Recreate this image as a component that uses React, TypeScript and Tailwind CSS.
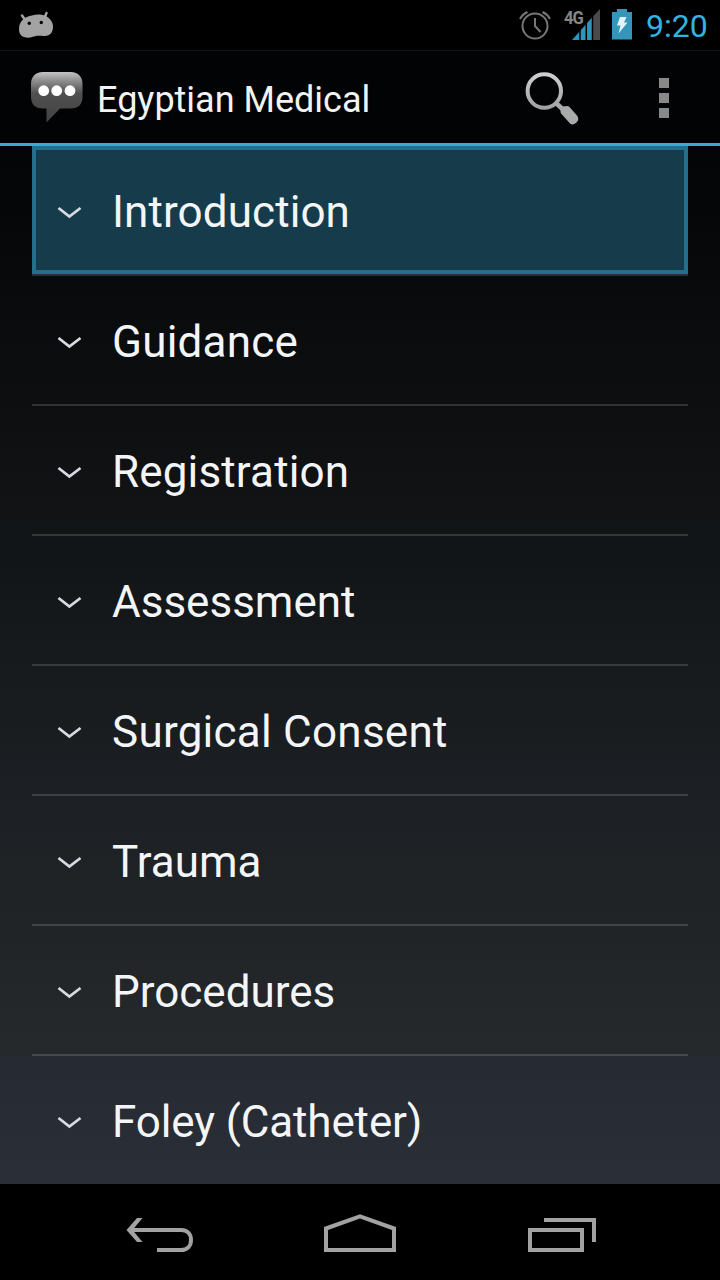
type Section = {
  title: string;
  tracking: string;
};

type SectionRowProps = Section & {
  selected?: boolean;
};

const sections: Section[] = [
  { title: "Introduction", tracking: "tracking-[0.1px]" },
  { title: "Guidance", tracking: "tracking-[0.2px]" },
  { title: "Registration", tracking: "tracking-[0.15px]" },
  { title: "Assessment", tracking: "tracking-normal" },
  { title: "Surgical Consent", tracking: "tracking-[0.25px]" },
  { title: "Trauma", tracking: "tracking-normal" },
  { title: "Procedures", tracking: "tracking-normal" },
  { title: "Foley (Catheter)", tracking: "tracking-[-0.12px]" },
];

function StatusBar() {
  return (
    <div className="flex h-[50px] shrink-0 items-center bg-black pl-[18px] pr-[13px]">
      <svg width="36" height="28" viewBox="0 0 36 28" className="shrink-0">
        <path d="M4 4.500l3.500 5M28.500 2l-2 5" stroke="#a3a3a3" strokeWidth="2.500" strokeLinecap="round" />
        <path
          d="M14 4.500C18 3 24 3 28 5c4 2.500 7 6 7 10.500 0 6-3 9.500-8 9.500-4 0-6-.5-9 0-3 .6-4.500 1.700-8 1.700-6 0-9-3.200-9-8.700C1 10 7 5.500 14 4.500Z"
          fill="#a3a3a3"
        />
        <circle cx="11.300" cy="12.300" r="1.700" fill="#000" />
        <circle cx="23.300" cy="11.500" r="1.700" fill="#000" />
      </svg>
      <div className="ml-auto flex items-center">
        <svg width="34" height="34" viewBox="0 0 34 34" fill="none" stroke="#777" strokeWidth="2">
          <circle cx="17" cy="18" r="12.500" />
          <path d="M17 10v8l5.500 6" />
          <path d="M2 11c1.500-3 4-5.500 7.500-7M24.500 4c3.500 1.500 6 4 7.500 7" />
        </svg>
        <div className="relative ml-[10px] h-[34px] w-[42px]">
          <svg width="42" height="34" viewBox="0 0 42 34">
            <path d="M31 8.500 38 1v31h-7Z" fill="#4a4a4c" />
            <path d="M10 32 30 9.500V32Z" fill="#2c96bd" />
            <path d="M18 18v14M24.300 12v20M30.500 6v26" stroke="#000" strokeWidth="1.500" />
          </svg>
          <span className="absolute left-0.5 top-0 origin-left scale-x-[0.87] font-[Roboto] text-[19px] font-bold leading-[19px] tracking-[-1px] text-[#858585]">
            4G
          </span>
        </div>
        <svg width="20" height="34" viewBox="0 0 20 34" className="ml-2">
          <path d="M5 1h10v3h5v27.500H0V4h5Z" fill="#3497b9" />
          <path d="M8 9h6.500l-2.500 5.500h3.500L6.500 25.500l2-8H5Z" fill="#e4f3fa" />
        </svg>
        <span className="ml-3.5 w-[61px] whitespace-nowrap pt-[3px] font-[Roboto] text-[32px] leading-[47px] text-[#35b2e2]">
          9:20
        </span>
      </div>
    </div>
  );
}

function ActionBar() {
  return (
    <header className="flex h-24 shrink-0 items-center border-b-[3px] border-t border-b-[#3aa9d4] border-t-[#141414] bg-[#020304] pl-[30px] pr-[51px] pt-1">
      <svg width="54" height="54" viewBox="0 0 54 54" className="-mt-1 shrink-0">
        <defs>
          <linearGradient id="bubble" x1="0" y1="0" x2="0" y2="1">
            <stop offset="0" stopColor="#c4c4c4" />
            <stop offset="0.180" stopColor="#8c8c8c" />
            <stop offset="0.420" stopColor="#505050" />
            <stop offset="1" stopColor="#424242" />
          </linearGradient>
        </defs>
        <path
          d="M13 2h27.500c8 0 12 5 12 12v12.500c0 8-4 12-12 12H30L16.500 52.500v-14H13c-8 0-12-4-12-12V14C1 7 5 2 13 2Z"
          fill="url(#bubble)"
        />
        <circle cx="13.700" cy="20.700" r="5.400" fill="#fff" />
        <circle cx="26.700" cy="20.700" r="5.400" fill="#fff" />
        <circle cx="40" cy="20.700" r="5.400" fill="#fff" />
      </svg>
      <h1 className="ml-[13px] mt-0.5 whitespace-nowrap font-[Roboto] text-[36px] leading-[48px] text-[#f3f3f3]">
        Egyptian Medical
      </h1>
      <svg width="56" height="56" viewBox="0 0 56 56" className="ml-auto shrink-0">
        <defs>
          <linearGradient id="lens" x1="0" y1="0" x2="0" y2="1">
            <stop offset="0" stopColor="#cfcfcf" />
            <stop offset="1" stopColor="#a2a2a2" />
          </linearGradient>
        </defs>
        <circle cx="20.300" cy="20" r="16.700" fill="none" stroke="url(#lens)" strokeWidth="4" />
        <path d="m32 32 7 6.500" stroke="#aaa" strokeWidth="4.500" />
        <path
          d="M39 35.500 43 35q1.500 0 2.500 1l7.500 8.500q2.500 3.500 0 6.500-3 3.500-6.500 2L37.500 43q-1-1-1-2.500v-3Z"
          fill="#aaa"
        />
      </svg>
      <div className="-mt-0.5 ml-[79px] flex w-[10px] shrink-0 flex-col gap-[5px]">
        <i className="size-[10px] bg-[#888]" />
        <i className="size-[10px] bg-[#888]" />
        <i className="size-[10px] bg-[#888]" />
      </div>
    </header>
  );
}

function SectionRow({ title, tracking, selected }: SectionRowProps) {
  return (
    <li className="h-[130px] shrink-0 border-b-2 border-white/15">
      <div
        className={
          selected
            ? "flex h-full items-center border-4 border-[#24708c] bg-[#163c4c] pl-5 pt-[3px]"
            : "flex h-full items-center pl-6 pt-[3px]"
        }
      >
        <svg width="28" height="16" viewBox="0 0 28 16" fill="none" className="mt-0.5 shrink-0">
          <path d="M2.500 3 13.400 11.500 24.500 3" stroke="#d6dce2" strokeWidth="2.800" />
        </svg>
        <span className={`ml-7 whitespace-nowrap font-[Roboto] text-[44px] leading-[52px] text-[#f3f5f7] ${tracking}`}>
          {title}
        </span>
      </div>
    </li>
  );
}

function NavigationBar() {
  return (
    <nav className="flex h-24 shrink-0 items-center bg-black pl-[126px] pt-1">
      <svg width="68" height="40" viewBox="0 0 68 40" fill="none">
        <path d="M5 16h50c6 0 10 4 10 10s-4 10-10 10H31" stroke="#a2a2a2" strokeWidth="4" />
        <path d="M.5 16 11 4h5.500l-10 12 10 12H11Z" fill="#a2a2a2" />
      </svg>
      <svg width="72" height="40" viewBox="0 0 72 40" fill="none" className="ml-[130px]">
        <path d="M2 14.500 36 2.300l34 12.200V36H2Z" stroke="#a2a2a2" strokeWidth="4" />
      </svg>
      <svg width="68" height="40" viewBox="0 0 68 40" fill="none" stroke="#a2a2a2" strokeWidth="4" className="ml-[132px]">
        <path d="M2 16h52v20H2Z" />
        <path d="M16 6h50v22" />
      </svg>
    </nav>
  );
}

export default function App() {
  return (
    <div className="flex h-[1280px] w-[720px] flex-col overflow-hidden bg-black font-[Roboto,sans-serif]">
      <StatusBar />
      <ActionBar />
      <main className="h-[1038px] shrink-0 overflow-hidden bg-[linear-gradient(to_bottom,#030405_0%,#101214_33%,#15191b_47%,#1c1f23_62%,#25292b_87.600%,#262a32_87.700%,#2a2e37_100%)] px-8">
        <ul>
          {sections.map((section, index) => (
            <SectionRow key={section.title} {...section} selected={index === 0} />
          ))}
        </ul>
      </main>
      <NavigationBar />
    </div>
  );
}
